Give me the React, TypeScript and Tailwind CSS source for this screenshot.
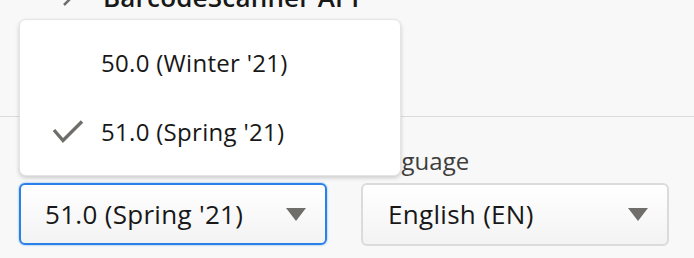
import React from 'react';

const font = { fontFamily: '"Open Sans", "Liberation Sans", sans-serif' };

function Arrow() {
  return (
    <svg width="20" height="13" viewBox="0 0 20 13" className="shrink-0">
      <path d="M0 0 H20 L10 13 Z" fill="#706e6b" />
    </svg>
  );
}

function Check() {
  return (
    <svg width="32" height="24" viewBox="0 0 32 24">
      <path d="M2 10 L11 20.5 L30 1.5" fill="none" stroke="#706e6b" strokeWidth="3.4" />
    </svg>
  );
}

export default function App() {
  return (
    <div className="relative w-[694px] h-[258px] overflow-hidden bg-[#f8f8f8] text-[#181818]" style={font}>
      {/* Top section */}
      <div className="flow-root h-[117px] border-b border-[#dddbda]">
        <div className="flex items-center h-[30px] -mt-[18px] pl-[62px] gap-[29px]">
          <svg width="12" height="20" viewBox="0 0 12 20">
            <path d="M2 2 L10 10 L2 18" fill="none" stroke="#706e6b" strokeWidth="2.5" />
          </svg>
          <span className="text-[26px] leading-none font-semibold tracking-[0.2px]">BarcodeScanner API</span>
        </div>
      </div>

      {/* Form row */}
      <div className="flex gap-[34px] pl-[19px] pt-[29px]">
        <div className="w-[308px]">
          <div className="text-[24px] leading-[30px] text-[#3e3e3c]">API Version</div>
          <div className="mt-[7px] h-[62px] flex items-center justify-between pl-[24px] pr-[19px] rounded-[6px] border-2 border-[#2b80e8] bg-gradient-to-b from-white to-[#f3f3f3] shadow-[0_0_2px_#5aa0f0]">
            <span className="text-[26px] tracking-[0.3px]">51.0 (Spring '21)</span>
            <Arrow />
          </div>
        </div>
        <div className="w-[308px]">
          <div className="text-[24px] leading-[30px] text-[#3e3e3c]">Language</div>
          <div className="mt-[7px] h-[63px] flex items-center justify-between pl-[25px] pr-[19px] rounded-[6px] border-2 border-[#dddbda] bg-gradient-to-b from-white to-[#f3f3f3]">
            <span className="text-[26px] tracking-[0.3px]">English (EN)</span>
            <Arrow />
          </div>
        </div>
      </div>

      {/* Dropdown menu */}
      <div className="absolute left-[19px] top-[19px] w-[382px] h-[157px] bg-white rounded-[7px] border border-[#e5e5e5] shadow-[0_2px_4px_rgba(0,0,0,0.18)] flex flex-col justify-center gap-[34px]">
        <div className="flex items-center h-[35px]">
          <span className="w-[81px]" />
          <span className="text-[24px] tracking-[0.3px]">50.0 (Winter '21)</span>
        </div>
        <div className="flex items-center h-[35px]">
          <span className="w-[81px] pl-[32px]"><Check /></span>
          <span className="text-[24px] tracking-[0.3px]">51.0 (Spring '21)</span>
        </div>
      </div>
    </div>
  );
}
